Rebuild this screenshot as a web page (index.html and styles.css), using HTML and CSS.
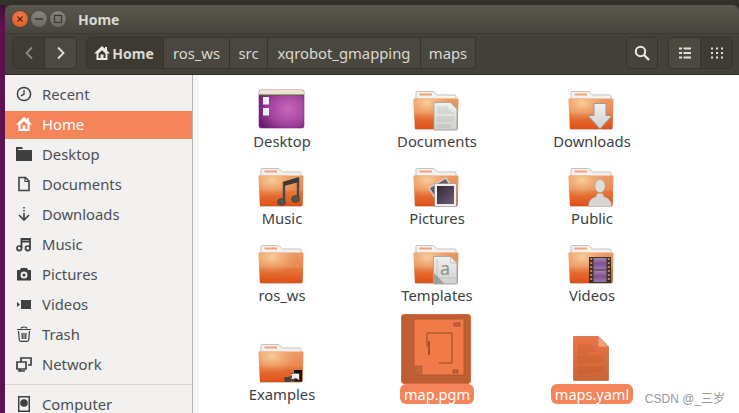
FILE: index.html
```html
<!DOCTYPE html>
<html lang="en">
<head>
<meta charset="utf-8">
<title>Home</title>
<link rel="stylesheet" href="styles.css">
</head>
<body>
<svg class="defs" aria-hidden="true">
  <defs>
    <linearGradient id="fFront" x1="0" y1="0" x2="0" y2="1">
      <stop offset="0" stop-color="#eb9a63"/><stop offset=".47" stop-color="#e98a52"/><stop offset=".53" stop-color="#e6773c"/><stop offset="1" stop-color="#dd4f17"/>
    </linearGradient>
    <radialGradient id="fGlow" cx=".3" cy=".15" r=".55">
      <stop offset="0" stop-color="#fbd9a8" stop-opacity=".85"/><stop offset="1" stop-color="#f5b27c" stop-opacity="0"/>
    </radialGradient>
    <radialGradient id="dPurple" cx=".65" cy=".5" r=".7">
      <stop offset="0" stop-color="#c868b8"/><stop offset=".6" stop-color="#a2429f"/><stop offset="1" stop-color="#6a1f70"/>
    </radialGradient>
    <linearGradient id="gPage" x1="0" y1="0" x2="0" y2="1">
      <stop offset="0" stop-color="#f1f1ef"/><stop offset="1" stop-color="#cfcfcc"/>
    </linearGradient>
    <linearGradient id="gPhoto" x1="0" y1="0" x2="1" y2="1">
      <stop offset="0" stop-color="#2c2430"/><stop offset="1" stop-color="#75607c"/>
    </linearGradient>
    <linearGradient id="gFilm" x1="0" y1="0" x2="0" y2="1">
      <stop offset="0" stop-color="#a985b5"/><stop offset=".5" stop-color="#7d5390"/><stop offset="1" stop-color="#9d77ab"/>
    </linearGradient>
    <linearGradient id="gDoc" x1="0" y1="0" x2="0" y2="1">
      <stop offset="0" stop-color="#ec7446"/><stop offset="1" stop-color="#cb6434"/>
    </linearGradient>
    <symbol id="folder" viewBox="0 0 48 48">
      <path d="M3 16V9.500q0-1 1-1h16.500l4 3.500H42q1 0 1 1v4z" fill="#f3f2f0" stroke="#c4c3c0"/>
      <rect x="6.500" y="10.500" width="12.500" height="2" fill="#f3a177"/>
      <path d="M1.500 15.500h43q1 0 1 1l-.8 28.500q0 1-1 1H2.800q-1 0-1-1L.5 16.500q0-1 1-1z" fill="url(#fFront)"/>
      <path d="M1.500 15.500h43q1 0 1 1l-.8 28.500q0 1-1 1H2.800q-1 0-1-1L.5 16.500q0-1 1-1z" fill="url(#fGlow)"/>
      <rect x="2" y="46" width="42" height="1" fill="#b9a595" opacity=".6"/>
    </symbol>
    <symbol id="s-clock" viewBox="0 0 16 16"><circle cx="8" cy="8" r="6.600" fill="none" stroke="currentColor" stroke-width="1.500"/><path d="M8 4v4.300L4.800 9.800" fill="none" stroke="currentColor" stroke-width="1.300"/></symbol>
    <symbol id="s-home" viewBox="0 0 16 16"><path fill-rule="evenodd" d="M8 1 0 8.500h2.500V15h11V8.500H16L13 5.600V2h-2v1.700zM4.500 8.500 8 5.200l3.500 3.300V13h-2V9.500h-3V13h-2z" fill="currentColor"/></symbol>
  </defs>
</svg>
<div class="screen">
  <div class="top-strip"></div>
  <div class="desk">
    <div class="launcher"></div>
    <div class="window">
      <header class="titlebar">
        <div class="traffic">
          <span class="dot close"><svg viewBox="0 0 16 16"><path d="M5.500 5.500l5 5m0-5l-5 5" stroke="#5d1d0a" stroke-width="1.200"/></svg></span>
          <span class="dot"><svg viewBox="0 0 16 16"><path d="M4 8h8" stroke="#3a3833" stroke-width="1.400"/></svg></span>
          <span class="dot"><svg viewBox="0 0 16 16"><rect x="4.500" y="4.500" width="7" height="7" fill="none" stroke="#3a3833" stroke-width="1.200"/></svg></span>
        </div>
        <span class="title">Home</span>
      </header>
      <div class="toolbar">
        <div class="btn-group nav">
          <span class="tool dim"><svg width="10" height="14" viewBox="0 0 10 14"><path d="M8 1.500 2.500 7 8 12.500" fill="none" stroke="#8d8a83" stroke-width="1.800"/></svg></span>
          <span class="tool lit"><svg width="10" height="14" viewBox="0 0 10 14"><path d="M2 1.500 7.500 7 2 12.500" fill="none" stroke="#e2dfd8" stroke-width="1.800"/></svg></span>
        </div>
        <nav class="crumbs">
          <span class="crumb c-home"><svg class="crumb-ico" width="16" height="16"><use href="#s-home"/></svg><b>Home</b></span>
          <span class="crumb c-ros">ros_ws</span>
          <span class="crumb c-src">src</span>
          <span class="crumb c-xq">xqrobot_gmapping</span>
          <span class="crumb c-maps">maps</span>
        </nav>
        <div class="spacer"></div>
        <span class="search-btn"><svg width="16" height="16" viewBox="0 0 16 16"><circle cx="6.500" cy="6.500" r="4.700" fill="none" stroke="#ece9e3" stroke-width="2"/><path d="m10 10 5 5" stroke="#ece9e3" stroke-width="2.400"/></svg></span>
        <div class="btn-group views">
          <span class="tool lit"><svg width="12" height="12" viewBox="0 0 12 12"><path d="M0 1.500h3m1.500 0H12M0 6h3m1.500 0H12M0 10.500h3m1.500 0H12" stroke="#e2dfd8" stroke-width="2"/></svg></span>
          <span class="tool dim"><svg width="12" height="12" viewBox="0 0 12 12"><path d="M0 1.500h2m3 0h2m3 0h2M0 6h2m3 0h2m3 0h2M0 10.500h2m3 0h2m3 0h2" stroke="#e2dfd8" stroke-width="2"/></svg></span>
        </div>
      </div>
      <div class="body">
        <aside class="sidebar">
          <ul class="places">
            <li class="place"><svg class="p-ico" width="16" height="16"><use href="#s-clock"/></svg>Recent</li>
            <li class="place active"><svg class="p-ico" width="16" height="16"><use href="#s-home"/></svg>Home</li>
            <li class="place"><svg class="p-ico" width="16" height="16" viewBox="0 0 16 16"><path d="M0 1h6l1 2h-5v1h14v11H0z" fill="currentColor"/></svg>Desktop</li>
            <li class="place"><svg class="p-ico" width="16" height="16" viewBox="0 0 16 16"><path d="M3 1.500h6.500L13 5v9.500H3z" fill="none" stroke="currentColor" stroke-width="1.600"/><path d="M9 1.500V5.500h4" fill="none" stroke="currentColor" stroke-width="1.200"/></svg>Documents</li>
            <li class="place"><svg class="p-ico" width="16" height="16" viewBox="0 0 16 16"><path d="M8 1v1.500M8 4v1.500M8 7v6M3 9l5 5 5-5" fill="none" stroke="currentColor" stroke-width="1.600"/></svg>Downloads</li>
            <li class="place"><svg class="p-ico" width="16" height="16" viewBox="0 0 16 16"><path d="M5.500 12V3H14v9M5.500 5.500H14" fill="none" stroke="currentColor" stroke-width="1.800"/><circle cx="3.300" cy="12.300" r="2.300" fill="none" stroke="currentColor" stroke-width="1.700"/><circle cx="11.800" cy="12.300" r="2.300" fill="none" stroke="currentColor" stroke-width="1.700"/></svg>Music</li>
            <li class="place"><svg class="p-ico" width="16" height="16" viewBox="0 0 16 16"><path fill-rule="evenodd" d="M1 4h3l1-2h6l1 2h3v10.500H1zM8 5.500a3.500 3.500 0 1 0 0 7 3.500 3.500 0 0 0 0-7z" fill="currentColor"/><circle cx="8" cy="9" r="1.600" fill="currentColor"/></svg>Pictures</li>
            <li class="place"><svg class="p-ico" width="16" height="16" viewBox="0 0 16 16"><path d="M5 4h10v9H5zM1 6l3 2.500L1 11z" fill="currentColor"/></svg>Videos</li>
            <li class="place"><svg class="p-ico" width="16" height="16" viewBox="0 0 16 16"><path d="M2.500 5l.8 9a1.500 1.500 0 0 0 1.500 1.300h6.400a1.500 1.500 0 0 0 1.500-1.300l.8-9M1 3.500h14M5 2.500Q5 1 8 1t3 1.500M6 7l.3 6M8 7v6M10 7l-.3 6" fill="none" stroke="currentColor" stroke-width="1.200"/></svg>Trash</li>
            <li class="place"><svg class="p-ico" width="16" height="16" viewBox="0 0 16 16"><path d="M1 6h9v7H1zM4 13v2M2 15h7M5 6V2h10v7h-3" fill="none" stroke="currentColor" stroke-width="1.700"/></svg>Network</li>
            <li class="separator"></li>
            <li class="place"><svg class="p-ico" width="16" height="16" viewBox="0 0 16 16"><path fill-rule="evenodd" d="M2 0h12v16H2zM3.500 1.500v13h9v-13z" fill="currentColor"/><circle cx="8" cy="7" r="3.800" fill="currentColor"/></svg>Computer</li>
          </ul>
        </aside>
        <div class="gutter"></div>
        <main class="files">
          <figure class="file">
            <div class="thumb"><svg width="48" height="48" viewBox="0 0 48 48"><rect x="1" y="7" width="45" height="38" rx="2" fill="url(#dPurple)" stroke="#7b2b7e" stroke-width=".6"/><path d="M1 9q0-2 2-2h41q2 0 2 2v3H1z" fill="#e9e5d1"/><rect x="1" y="11.500" width="45" height="1" fill="#5e5a3d"/><rect x="5" y="14" width="6" height="7.500" fill="#f1eef2"/><rect x="5" y="25" width="6" height="7.500" fill="#f1eef2"/></svg></div>
            <figcaption class="name">Desktop</figcaption>
          </figure>
          <figure class="file">
            <div class="thumb"><svg width="48" height="48" viewBox="0 0 48 48"><use href="#folder"/><path d="M21 19.500h16.500l6.500 6.500v21H21z" fill="url(#gPage)" stroke="#a9a8a5"/><path d="M24 24h11M24 26h12M24 28h14M24 30h17M24 34h17M24 36h17M24 38h17M24 42h14M24 44h14" stroke="#a3a29f" stroke-width=".6" stroke-dasharray="1.500 .5"/></svg></div>
            <figcaption class="name">Documents</figcaption>
          </figure>
          <figure class="file">
            <div class="thumb"><svg width="48" height="48" viewBox="0 0 48 48"><use href="#folder"/><path d="M26 20.500h12v12h6L32 46 20 32.500h6z" fill="url(#gPage)" stroke="#9c9b98"/></svg></div>
            <figcaption class="name">Downloads</figcaption>
          </figure>
          <figure class="file">
            <div class="thumb"><svg width="48" height="48" viewBox="0 0 48 48"><use href="#folder"/><path d="M26 41V23l14-4v19" fill="none" stroke="#4a4947" stroke-width="2.400"/><path d="M25 22l16-5v5l-15 4z" fill="#3a3937"/><ellipse cx="23.500" cy="42" rx="3.800" ry="3.300" fill="#55544f" stroke="#33322f" stroke-width=".7"/><ellipse cx="37.500" cy="39" rx="3.800" ry="3.300" fill="#55544f" stroke="#33322f" stroke-width=".7"/></svg></div>
            <figcaption class="name">Music</figcaption>
          </figure>
          <figure class="file">
            <div class="thumb"><svg width="48" height="48" viewBox="0 0 48 48"><use href="#folder"/><path d="M16 28 33 18l4 7-16 11z" fill="#6a5a6e" stroke="#d7d5d2" stroke-width="1.400"/><rect x="23" y="25" width="19" height="20" fill="url(#gPhoto)" stroke="#f0efed" stroke-width="2"/><rect x="21.500" y="23.500" width="22" height="23" fill="none" stroke="#a6a5a3" stroke-width=".6"/></svg></div>
            <figcaption class="name">Pictures</figcaption>
          </figure>
          <figure class="file">
            <div class="thumb"><svg width="48" height="48" viewBox="0 0 48 48"><use href="#folder"/><ellipse cx="32" cy="26" rx="5" ry="6.500" fill="#dededc" stroke="#aeadaa" stroke-width=".5"/><path d="M20.500 46.500q0-8 7-9.500l2-3.500h5l2 3.500q7 1.500 7 9.500z" fill="#d7d6d4" stroke="#aeadaa" stroke-width=".5"/></svg></div>
            <figcaption class="name">Public</figcaption>
          </figure>
          <figure class="file">
            <div class="thumb"><svg width="48" height="48" viewBox="0 0 48 48"><use href="#folder"/></svg></div>
            <figcaption class="name">ros_ws</figcaption>
          </figure>
          <figure class="file">
            <div class="thumb"><svg width="48" height="48" viewBox="0 0 48 48"><use href="#folder"/><path d="M20.500 19.500h17l6.500 6.500v21H20.500z" fill="url(#gPage)" stroke="#a9a8a5"/><path d="M24 22v23M21 41h22M37.500 19.500V26H44" fill="none" stroke="#b8b7b4" stroke-width=".7"/><text class="tpl-a" x="27" y="38">a</text><path d="M21 36v10.500h10z" fill="#8a8986" opacity=".7"/></svg></div>
            <figcaption class="name">Templates</figcaption>
          </figure>
          <figure class="file">
            <div class="thumb"><svg width="48" height="48" viewBox="0 0 48 48"><use href="#folder"/><rect x="21" y="20" width="22" height="26" fill="#33322f"/><rect x="25.500" y="21" width="13" height="11.500" fill="url(#gFilm)"/><rect x="25.500" y="33.500" width="13" height="11.500" fill="url(#gFilm)"/><path d="M23.200 21v24M40.800 21v24" stroke="#c9834f" stroke-width="2" stroke-dasharray="2 2"/></svg></div>
            <figcaption class="name">Videos</figcaption>
          </figure>
          <figure class="file tall">
            <div class="thumb"><svg width="48" height="48" viewBox="0 0 48 48"><use href="#folder"/><rect x="36" y="34" width="8" height="11.500" fill="#111"/><path d="M26 41q6 1 8-2l-2-2h10v8l-3-2q-4 3-9 3h-3z" fill="#4c3f3a"/><path d="M33 38q3-1 8 0v6l-3-2q-2 1-5 1 2-2 0-5z" fill="#f1efec"/></svg></div>
            <figcaption class="name">Examples</figcaption>
          </figure>
          <figure class="file tall picked">
            <div class="thumb"><span class="tile"><svg width="70" height="70" viewBox="0 0 70 70"><rect x="13" y="5" width="50" height="56" fill="#f07a48" stroke="#a8502b" stroke-width=".8"/><path d="M26 19h25v30H38M26 19v14" fill="none" stroke="#7e3d20" stroke-width=".8"/><rect x="27" y="27" width="2" height="14" fill="#a8502b"/><rect x="53" y="9" width="6" height="3" fill="#c86a3e" stroke="#7e3d20" stroke-width=".6"/><rect x="52" y="56" width="5" height="3" fill="#c86a3e" stroke="#7e3d20" stroke-width=".6"/><rect x="14" y="52" width="7" height="8" fill="#c4633a" stroke="#a8502b" stroke-width=".5"/></svg></span></div>
            <figcaption class="name">map.pgm</figcaption>
          </figure>
          <figure class="file tall picked">
            <div class="thumb"><svg width="48" height="48" viewBox="0 0 48 48"><path d="M5.500 .5h25l10 10v34h-35z" fill="url(#gDoc)" stroke="#b25a30" stroke-width=".6"/><path d="M30.500 .5v10h10z" fill="#f0a27c"/><path d="M10 9h14M10 11h18M10 13h17M10 15h18M10 17h10M10 20h26M10 22h24M10 24h26M10 26h22M10 31h26M10 33h24M10 35h26M10 37h12" stroke="#a8532c" stroke-width=".5" stroke-dasharray="2 .6"/></svg></div>
            <figcaption class="name">maps.yaml</figcaption>
          </figure>
        </main>
      </div>
    </div>
  </div>
  <span class="watermark">CSDN @_三岁</span>
</div>
</body>
</html>
```
FILE: styles.css
```css
html, body {
  margin: 0;
  padding: 0;
}
body {
  width: 739px;
  height: 413px;
  overflow: hidden;
  font-family: "Noto Sans", "Open Sans", sans-serif;
  background: #3a3733;
}
.defs {
  position: absolute;
  width: 0;
  height: 0;
}
.screen {
  position: relative;
  width: 739px;
  height: 413px;
  display: flex;
  flex-direction: column;
  overflow: hidden;
}
.top-strip {
  height: 5px;
  flex: none;
  background: #34312d;
}
.desk {
  flex: 1;
  display: flex;
  min-height: 0;
  background: #34312d;
}
.launcher {
  width: 5px;
  flex: none;
  background: linear-gradient(#3f0f38 0, #5e1150 20px, #5e1150 100%);
}
.window {
  flex: 1;
  display: flex;
  flex-direction: column;
  min-width: 0;
  border-radius: 7px 7px 0 0;
  overflow: hidden;
  background: #44413a;
}
.titlebar {
  height: 29px;
  flex: none;
  display: flex;
  align-items: center;
  padding-left: 7px;
  box-sizing: border-box;
  background: linear-gradient(#5b574e, #47443d);
  border-bottom: 1px solid #3d3a34;
}
.traffic {
  display: flex;
  gap: 3px;
}
.dot {
  width: 16px;
  height: 16px;
  border-radius: 50%;
  background: linear-gradient(#86847c, #6c6a62);
  box-shadow: 0 0 0 .5px #3a3833;
}
.dot svg {
  display: block;
  width: 16px;
  height: 16px;
}
.dot.close {
  background: radial-gradient(circle at 50% 35%, #f08050, #d9501f);
}
.title {
  margin-left: 12px;
  color: #dcd9d1;
  font-size: 14px;
  font-weight: 700;
}
.toolbar {
  height: 41px;
  flex: none;
  box-sizing: border-box;
  display: flex;
  align-items: center;
  padding: 3px 6px 5px 7px;
  background: #44413a;
  border-bottom: 1px solid #2f2d28;
}
.btn-group {
  display: flex;
  height: 32px;
  flex: none;
  border: 1px solid #35332d;
  border-radius: 5px;
  box-sizing: border-box;
  overflow: hidden;
}
.tool {
  flex: 1;
  display: flex;
  align-items: center;
  justify-content: center;
}
.tool + .tool {
  border-left: 1px solid #35332d;
}
.tool.dim {
  background: #3f3c36;
}
.tool.lit {
  background: #4c4941;
}
.nav {
  width: 65px;
}
.crumbs {
  margin-left: 9px;
  display: flex;
  height: 32px;
  color: #dcd9d1;
  font-size: 14.800px;
  border: 1px solid #35332d;
  border-radius: 5px 0 0 5px;
  box-sizing: border-box;
}
.crumb {
  display: flex;
  align-items: center;
  justify-content: center;
  background: #4a4740;
  box-sizing: border-box;
}
.crumb + .crumb {
  border-left: 1px solid #35332d;
}
.crumb b {
  font-weight: 700;
  font-size: 14px;
}
.crumb-ico {
  margin-right: 2px;
  margin-left: -2px;
  color: #ece9e3;
}
.c-home {
  width: 76px;
  background: #3d3a34;
  border-radius: 4px 0 0 4px;
}
.c-ros {
  width: 66px;
}
.c-src {
  width: 38px;
}
.c-xq {
  width: 153px;
}
.c-maps {
  width: 55px;
}
.spacer {
  flex: 1;
}
.search-btn {
  width: 32px;
  height: 32px;
  flex: none;
  box-sizing: border-box;
  display: flex;
  align-items: center;
  justify-content: center;
  background: #46433c;
  border: 1px solid #35332d;
  border-radius: 5px;
}
.views {
  width: 65px;
  margin-left: 10px;
}
.body {
  flex: 1;
  display: flex;
  min-height: 0;
  background: #fff;
}
.sidebar {
  width: 188px;
  flex: none;
  box-sizing: border-box;
  background: #f2f1ef;
  border-right: 1px solid #b6b4ae;
  padding-top: 4px;
  overflow: hidden;
}
.places {
  list-style: none;
  margin: 0;
  padding: 0;
}
.place {
  height: 30px;
  display: flex;
  align-items: center;
  padding-left: 11px;
  font-size: 14.800px;
  color: #4c4f56;
}
.p-ico {
  flex: none;
  margin-right: 10px;
  color: #3f3f3f;
}
.place.active {
  background: #f4845a;
  color: #fff;
  height: 28px;
  margin-top: 2px;
  padding-bottom: 2px;
  box-sizing: border-box;
}
.place.active .p-ico {
  color: #fff;
}
.separator {
  height: 1px;
  margin-top: 5px;
  margin-bottom: 4px;
  background: #d8d6d3;
}
.gutter {
  width: 6px;
  flex: none;
  background: #f7f6f5;
}
.files {
  flex: 1;
  display: grid;
  grid-template-columns: repeat(3, 155px);
  grid-auto-rows: min-content;
  row-gap: 9px;
  align-content: start;
  padding: 8px 0 0 5.500px;
}
.file {
  margin: 0;
  display: flex;
  flex-direction: column;
  align-items: center;
}
.thumb {
  height: 48px;
  display: flex;
  align-items: flex-end;
  justify-content: center;
}
.thumb svg {
  display: block;
}
.tall .thumb {
  height: 70px;
}
.name {
  height: 20px;
  line-height: 20px;
  padding: 0 5px;
  font-size: 14.800px;
  color: #3c3f46;
  white-space: nowrap;
}
.picked .name {
  background: #f4845a;
  color: #fff;
  border-radius: 6px;
  font-size: 14.500px;
  padding: 0 4px;
}
.tile {
  display: block;
  width: 70px;
  height: 70px;
  margin-right: 2px;
  background: #bf5f35;
  border: 1px solid #d96a3f;
  border-radius: 3px;
  box-sizing: border-box;
  overflow: hidden;
}
.tile svg {
  margin: -1px;
}
.tpl-a {
  font-family: "Noto Sans", sans-serif;
  font-size: 18px;
  fill: #8e8d8a;
}
.watermark {
  position: absolute;
  right: 14px;
  bottom: 7px;
  font-family: "Liberation Sans", "Noto Sans CJK SC", sans-serif;
  font-size: 12px;
  color: #999;
}
```
